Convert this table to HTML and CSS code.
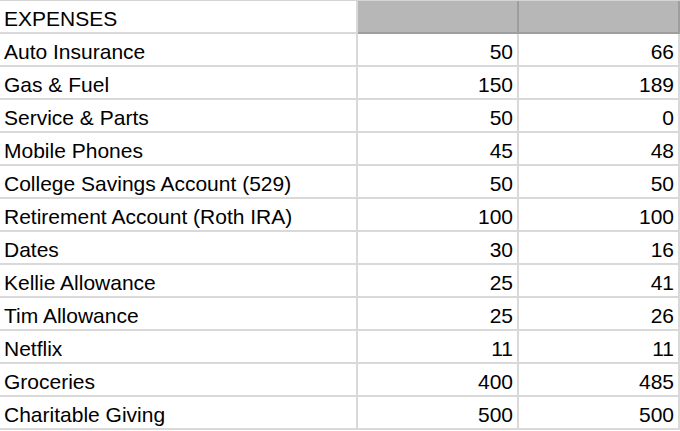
FILE: index.html
```html
<!DOCTYPE html>
<html>
<head>
<meta charset="utf-8">
<link rel="stylesheet" href="styles.css">
</head>
<body>
<div class="sheet">
  <div class="row head"><div class="c label">EXPENSES</div><div class="c num hd"></div><div class="c num hd"></div></div>
  <div class="row"><div class="c label">Auto Insurance</div><div class="c num">50</div><div class="c num">66</div></div>
  <div class="row"><div class="c label">Gas &amp; Fuel</div><div class="c num">150</div><div class="c num">189</div></div>
  <div class="row"><div class="c label">Service &amp; Parts</div><div class="c num">50</div><div class="c num">0</div></div>
  <div class="row"><div class="c label">Mobile Phones</div><div class="c num">45</div><div class="c num">48</div></div>
  <div class="row"><div class="c label">College Savings Account (529)</div><div class="c num">50</div><div class="c num">50</div></div>
  <div class="row"><div class="c label">Retirement Account (Roth IRA)</div><div class="c num">100</div><div class="c num">100</div></div>
  <div class="row"><div class="c label">Dates</div><div class="c num">30</div><div class="c num">16</div></div>
  <div class="row"><div class="c label">Kellie Allowance</div><div class="c num">25</div><div class="c num">41</div></div>
  <div class="row"><div class="c label">Tim Allowance</div><div class="c num">25</div><div class="c num">26</div></div>
  <div class="row"><div class="c label">Netflix</div><div class="c num">11</div><div class="c num">11</div></div>
  <div class="row"><div class="c label">Groceries</div><div class="c num">400</div><div class="c num">485</div></div>
  <div class="row"><div class="c label">Charitable Giving</div><div class="c num">500</div><div class="c num">500</div></div>
</div>
</body>
</html>
```

FILE: styles.css
```css
html, body {
  margin: 0;
  padding: 0;
  background: #ffffff;
  overflow: hidden;
}
.sheet {
  display: flex;
  flex-direction: column;
  margin-top: -1px;
  font-family: "Liberation Sans", Arial, sans-serif;
  font-size: 21px;
  color: #000000;
  border-top: 2px solid #d4d4d4;
}
.row {
  display: grid;
  grid-template-columns: 358px 161px 161px;
  height: 33px;
}
.c {
  box-sizing: border-box;
  border-right: 2px solid #d9d9d9;
  border-bottom: 2px solid #d9d9d9;
  line-height: 35px;
  white-space: nowrap;
  overflow: hidden;
}
.label {
  padding-left: 4px;
}
.num {
  text-align: right;
  padding-right: 4px;
}
.hd {
  background: #b7b7b7;
  border-right-color: #9e9e9e;
  border-bottom-color: #9e9e9e;
}
.head .c:first-child {
  border-right-color: #d9d9d9;
}
```
